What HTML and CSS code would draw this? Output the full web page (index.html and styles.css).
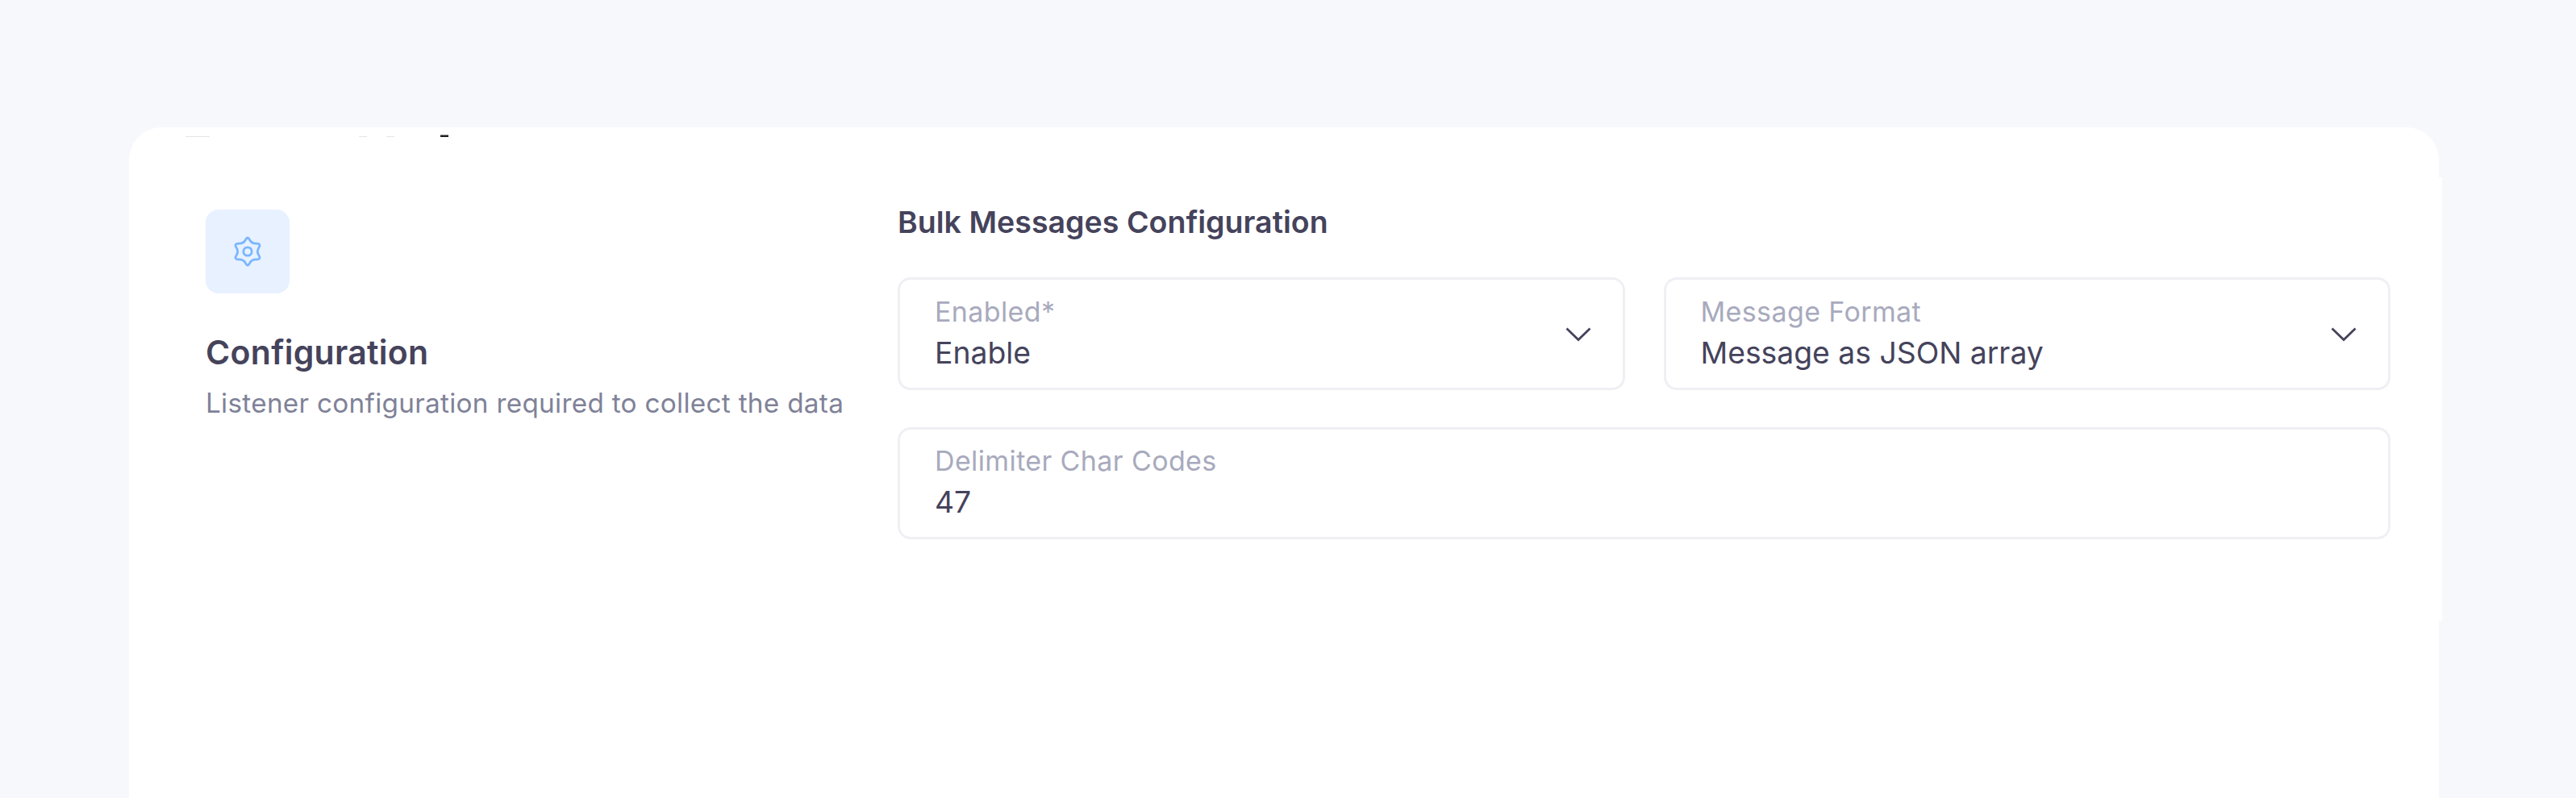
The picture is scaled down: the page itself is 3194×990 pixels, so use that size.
FILE: index.html
```html
<!DOCTYPE html>
<html lang="en">
<head>
<meta charset="UTF-8">
<title>Configuration</title>
<link rel="stylesheet" href="styles.css">
</head>

<body>

<div class="card">
    <!-- bottom edge of the scrolled title -->
    <svg class="title-edge" width="340" height="3" viewBox="0 0 340 3">
        <path d="M0 2h30v1H0zM215 2h10v1h-10zM249 2h10v1h-10z" fill="#e6e6e6"/>
        <path d="M316 0h10v1h-10z" fill="#8f8d8e"/>
        <path d="M316 1h10v2h-10z" fill="#231f20"/>
    </svg>

    <div class="panel">
        <div class="intro">
            <div class="icon-box">
                <svg class="gear" width="36" height="40" viewBox="0 0 36 40">
                    <path d="M18 3C19.500 3 20 4.500 21 6.300C22.600 9 25.400 10.300 29 10.100C31.500 10 33 10.800 33 12.600C33 14.400 30.300 16.600 30.300 20C30.300 23.400 33 25.600 33 27.400C33 29.200 31.500 30 29 29.900C25.400 29.700 22.600 31 21 33.700C20 35.500 19.500 37 18 37C16.500 37 16 35.500 15 33.700C13.400 31 10.600 29.700 7 29.900C4.500 30 3 29.200 3 27.400C3 25.600 5.700 23.400 5.700 20C5.700 16.600 3 14.400 3 12.600C3 10.800 4.500 10 7 10.100C10.600 10.300 13.400 9 15 6.300C16 4.500 16.500 3 18 3Z"/>
                    <circle cx="18" cy="20" r="5.200"/>
                </svg>
            </div>
            <h2 class="intro-title">Configuration</h2>
            <p class="intro-text">Listener configuration required to collect the data</p>
        </div>

        <div class="form">
            <h3 class="form-title">Bulk Messages Configuration</h3>
            <div class="fields">
                <div class="field">
                    <div class="field-body">
                        <span class="label">Enabled*</span>
                        <span class="value">Enable</span>
                    </div>
                    <svg class="chevron" width="32" height="20" viewBox="0 0 32 20"><path d="M1.500 2.500L16 16.500L30.500 2.500"/></svg>
                </div>
                <div class="field">
                    <div class="field-body">
                        <span class="label">Message Format</span>
                        <span class="value">Message as JSON array</span>
                    </div>
                    <svg class="chevron" width="32" height="20" viewBox="0 0 32 20"><path d="M1.500 2.500L16 16.500L30.500 2.500"/></svg>
                </div>
                <div class="field wide">
                    <div class="field-body">
                        <span class="label">Delimiter Char Codes</span>
                        <span class="value">47</span>
                    </div>
                </div>
            </div>
        </div>
    </div>
</div>

</body>
</html>
```
FILE: styles.css
```css
*{
   box-sizing:border-box;
}
body{
   margin:0;
   padding:158px 0 0 160px;
   height:990px;
   overflow:hidden;
   background:#f7f8fb;
   color:#45435b;
   font-family:Inter, "Liberation Sans", sans-serif;
}
.card{
   width:2864px;
   height:832px;
   padding-top:9px;
   background:#fff;
   border-radius:40px 40px 0 0;
}
.title-edge{
   display:block;
   margin-left:70px;
}
/* slightly wider than the card */
.panel{
   display:flex;
   width:2868px;
   height:550px;
   margin-top:50px;
   padding:0 64px 0 95px;
   background:#fff;
}
.intro{
   width:858px;
   padding-top:40px;
}
.icon-box{
   display:flex;
   align-items:center;
   justify-content:center;
   width:104px;
   height:104px;
   border-radius:16px;
   background:#e7f1ff;
}
.gear{
   fill:none;
   stroke:#7ab6ff;
   stroke-width:2.8;
}
.intro-title{
   margin:48px 0 0;
   font-size:41px;
   font-weight:600;
   line-height:50px;
   letter-spacing:0.3px;
}
.intro-text{
   margin:18px 0 0;
   font-size:33.3px;
   line-height:40px;
   letter-spacing:0.29px;
   color:#7f8298;
   white-space:nowrap;
}
.form{
   flex:1;
   padding-top:32px;
}
.form-title{
   margin:0;
   font-size:37.5px;
   font-weight:600;
   line-height:48px;
   letter-spacing:0.03px;
}
.fields{
   display:grid;
   grid-template-columns:1fr 1fr;
   gap:46px 48px;
   margin-top:44px;
}
.field{
   display:flex;
   align-items:center;
   justify-content:space-between;
   height:139.5px;
   padding:0 39px 0 43px;
   border:3px solid #efeff4;
   border-radius:16px;
}
.wide{
   grid-column:span 2;
}
.field-body{
   display:flex;
   flex-direction:column;
   padding-bottom:3px;
}
.label{
   font-size:34px;
   line-height:50px;
   letter-spacing:0.38px;
   color:#a8aabd;
}
.value{
   font-size:37.3px;
   line-height:51px;
}
.chevron{
   margin-top:3px;
   fill:none;
   stroke:#45435b;
   stroke-width:2.8;
}
```
